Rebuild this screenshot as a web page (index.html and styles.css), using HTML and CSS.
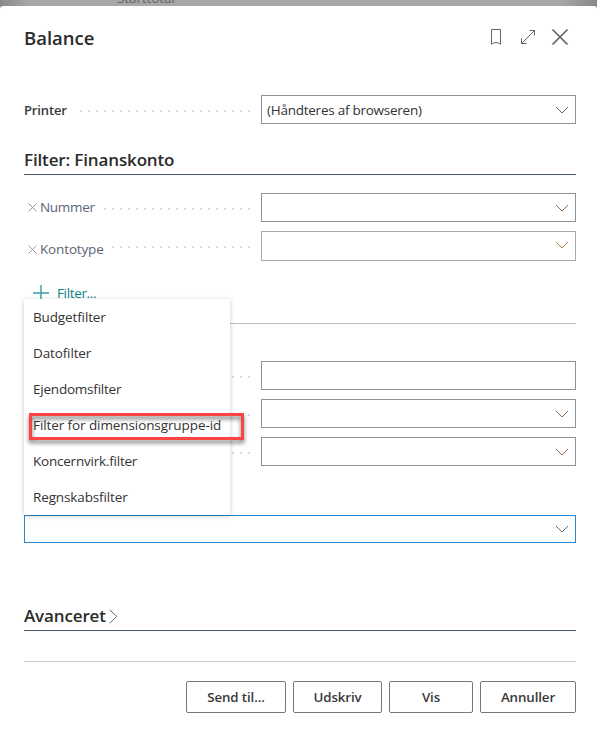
FILE: index.html
```html
<!DOCTYPE html>
<html lang="da">
<head>
    <meta charset="UTF-8">
    <meta name="viewport" content="width=device-width, initial-scale=1.0">
    <title>Balance</title>
    <link rel="stylesheet" href="styles.css">
</head>
<body>
    <div class="backdrop"><span class="backdrop-text">Starttotal</span></div>
    <div class="dialog">
        <header class="dialog-header">
            <h1>Balance</h1>
            <div class="header-icons">
                <svg width="12" height="18" viewBox="0 0 12 18"><path d="M1.5 1.5h9v14.8q-4.5-3.6-9 0z"/></svg>
                <svg width="16" height="16" viewBox="0 0 16 16"><path d="M1.5 14.5l13-13M9.5 1.5h5v5M1.5 9.5v5h5"/></svg>
                <svg class="close" width="18" height="18" viewBox="0 0 18 18"><path d="M1.5 1.5l15 15M16.5 1.5l-15 15"/></svg>
            </div>
        </header>

        <div class="row">
            <label class="strong">Printer</label><span class="dots"></span>
            <div class="field"><span class="value">(Håndteres af browseren)</span><svg class="chevron" width="14" height="8" viewBox="0 0 14 8"><path d="M1 1l6 6 6-6"/></svg></div>
        </div>

        <h2 class="section-filter"><span class="title-filter">Filter: Finanskonto</span></h2>
        <div class="row row-number">
            <svg class="remove" width="9" height="9" viewBox="0 0 9 9"><path d="M.5.5l8 8M8.5.5l-8 8"/></svg><label class="number">Nummer</label><span class="dots"></span>
            <div class="field"><svg class="chevron warm" width="14" height="8" viewBox="0 0 14 8"><path d="M1 1l6 6 6-6"/></svg></div>
        </div>
        <div class="row row-type">
            <svg class="remove" width="9" height="9" viewBox="0 0 9 9"><path d="M.5.5l8 8M8.5.5l-8 8"/></svg><label class="type">Kontotype</label><span class="dots"></span>
            <div class="field light"><svg class="chevron gold" width="14" height="8" viewBox="0 0 14 8"><path d="M1 1l6 6 6-6"/></svg></div>
        </div>

        <div class="add-filter">
            <svg width="16" height="16" viewBox="0 0 16 16"><path d="M8 0v16M0 8h16"/></svg>
            <span class="add-text">Filter...</span>
            <ul class="menu">
                <li>Budgetfilter</li>
                <li>Datofilter</li>
                <li class="tight">Ejendomsfilter</li>
                <li class="marked">Filter for dimensionsgruppe-id</li>
                <li class="tight">Koncernvirk.filter</li>
                <li>Regnskabsfilter</li>
            </ul>
        </div>

        <div class="totals">
            <div class="row"><span class="dots"></span><div class="field"></div></div>
            <div class="row"><span class="dots"></span><div class="field"><svg class="chevron warm" width="14" height="8" viewBox="0 0 14 8"><path d="M1 1l6 6 6-6"/></svg></div></div>
            <div class="row"><span class="dots"></span><div class="field"><svg class="chevron warm" width="14" height="8" viewBox="0 0 14 8"><path d="M1 1l6 6 6-6"/></svg></div></div>
        </div>

        <div class="field wide"><svg class="chevron" width="14" height="8" viewBox="0 0 14 8"><path d="M1 1l6 6 6-6"/></svg></div>

        <h2 class="section-advanced"><span class="title-advanced">Avanceret</span><svg width="9" height="15" viewBox="0 0 9 15"><path d="M.7.7l7 6.8-7 6.8"/></svg></h2>

        <footer class="actions">
            <button type="button" class="send">Send til...</button>
            <button type="button" class="print">Udskriv</button>
            <button type="button" class="show">Vis</button>
            <button type="button" class="cancel">Annuller</button>
        </footer>
    </div>
</body>
</html>
```

FILE: styles.css
```css
* {
    box-sizing: border-box;
}
body {
    margin: 0;
    height: 735px;
    overflow: hidden;
    background: #a6a8a7;
    font-family: "Open Sans", "Noto Sans", sans-serif;
    font-size: 13.5px;
    color: #333;
}
svg {
    display: block;
    flex: none;
    fill: none;
    stroke: #666;
}

/* strip of the page behind the dialog */
.backdrop {
    height: 6px;
    overflow: hidden;
    background: linear-gradient(90deg, #888 0, #a6a8a7 30px, #a6a8a7 560px, #888 100%);
}
.backdrop-text {
    display: block;
    width: 58px;
    margin: -12px 0 0 117px;
    line-height: 20px;
    letter-spacing: -.1px;
    color: #666;
}
.dialog {
    height: 729px;
    padding: 0 21px 0 24px;
    background: #fff;
    border-radius: 4px 4px 0 0;
}
.dialog-header {
    display: flex;
    justify-content: space-between;
    height: 89px;
    padding-top: 22px;
}
h1, h2 {
    margin: 0;
    color: #2b2b2b;
    font-weight: 600;
}
h1 {
    font-size: 18.5px;
    line-height: 20px;
}
.header-icons {
    display: flex;
    align-items: center;
    gap: 18px;
    height: 18px;
    padding-right: 7px;
}
.header-icons .close {
    margin-left: -3px;
    stroke-width: 1.7;
}

/* label, dotted leader and input */
.row {
    display: flex;
    align-items: center;
    height: 29px;
}
.row label {
    line-height: 20px;
    white-space: nowrap;
    color: #5b6478;
}
.row .strong {
    width: 43px;
    font-weight: 600;
    font-size: 13px;
    letter-spacing: -.15px;
    color: #383838;
}
.dots {
    flex: 1;
    height: 2px;
    margin: 3px 11px 0 10px;
    background: repeating-linear-gradient(270deg, #dcdcdc 0, #dcdcdc 2px, transparent 2px, transparent 8px);
}
.field {
    display: flex;
    align-items: center;
    justify-content: space-between;
    flex: none;
    width: 315px;
    height: 100%;
    padding: 0 6px 0 5px;
    border: 1px solid #8a929c;
}
.field.light {
    border-color: #aaa;
}
.value {
    white-space: nowrap;
    letter-spacing: -.25px;
}
.chevron {
    margin: 1px 0 0 auto;
}
.chevron.warm {
    stroke: #96694f;
}
.chevron.gold {
    stroke: #b28b4e;
}
.remove {
    margin: 0 3px 0 4px;
    stroke: #8d929d;
    stroke-width: .9;
}
.row-number {
    margin-top: 18px;
}
.row-number .remove {
    margin-top: -1px;
}
.row .number {
    width: 54px;
    margin-top: -2px;
    letter-spacing: -.3px;
}
.row .type {
    width: 64px;
    letter-spacing: -.15px;
}
.row-type {
    height: 30px;
    margin-top: 9px;
}
.row-type .remove {
    margin-top: 6px;
}
.row-type label {
    margin-top: 5px;
}
.row-type .dots {
    margin-top: 2px;
    margin-left: 7px;
}
.row-type .chevron {
    margin-top: -2px;
}
h2 {
    display: flex;
    align-items: center;
    font-size: 17px;
    line-height: 24px;
    letter-spacing: -.14px;
    border-bottom: 1px solid #4b5868;
}
h2 span {
    margin-top: -2px;
}
.section-filter {
    height: 28px;
    margin-top: 23px;
}

/* add filter link with its open menu */
.add-filter {
    position: relative;
    display: flex;
    align-items: center;
    gap: 8px;
    height: 20px;
    margin-top: 22px;
    padding-left: 9px;
    color: #0b8387;
}
.add-filter svg {
    stroke: #379b9d;
    stroke-width: 1.4;
}
.add-text {
    letter-spacing: -.35px;
}
.menu {
    position: absolute;
    top: 16px;
    left: 0;
    width: 206px;
    margin: 0;
    padding: 0;
    list-style: none;
    background: #fff;
    color: #333;
    letter-spacing: -.13px;
    border-radius: 2px;
    box-shadow: 0 1px 5px rgba(0, 0, 0, .22);
}
.menu li {
    position: relative;
    height: 36px;
    padding-left: 9px;
    line-height: 36px;
    white-space: nowrap;
}
.menu .marked {
    letter-spacing: -.09px;
}
.menu .tight {
    letter-spacing: -.22px;
}
.marked::after {
    content: "";
    position: absolute;
    box-sizing: border-box;
    top: 6px;
    left: 5px;
    width: 215px;
    height: 27px;
    border: 3px solid #f94444;
    filter: drop-shadow(0 3px 2px rgba(0, 0, 0, .55));
}
.totals {
    display: grid;
    gap: 9px;
    margin-top: 20px;
    padding-top: 37px;
    border-top: 1px solid #b9bfc8;
}
.totals .dots {
    margin-left: 0;
}
.wide {
    width: 552px;
    height: 28px;
    margin-top: 49px;
    border-color: #2b88cf;
}
.wide .chevron {
    margin-top: 0;
}
.section-advanced {
    height: 28px;
    margin-top: 60px;
}
.section-advanced svg {
    margin: 0 0 0 3px;
}
.actions {
    display: flex;
    justify-content: flex-end;
    gap: 7px;
    margin-top: 30px;
    padding-top: 19px;
    border-top: 1px solid #c8c8c8;
}
button {
    height: 32px;
    padding: 0;
    border: 1px solid #777;
    border-radius: 2px;
    background: #fff;
    color: #383838;
    font: 600 13.3px "Open Sans", "Noto Sans", sans-serif;
    letter-spacing: -.1px;
}
.send {
    width: 100px;
}
.print {
    width: 89px;
}
.show {
    width: 84px;
}
.cancel {
    width: 96px;
}
```
